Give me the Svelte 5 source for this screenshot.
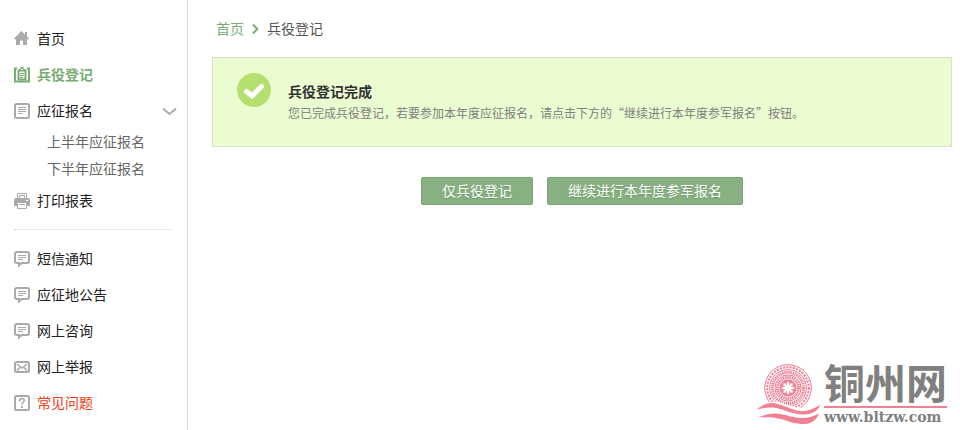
<script lang="ts">
  type Icon = 'home' | 'clipboard' | 'form' | 'printer' | 'message' | 'mail' | 'help';
  type Item = { label: string; icon: Icon; state?: 'active' | 'hot'; children?: string[] };

  const services: Item[] = [
    { label: '首页', icon: 'home' },
    { label: '兵役登记', icon: 'clipboard', state: 'active' },
    { label: '应征报名', icon: 'form', children: ['上半年应征报名', '下半年应征报名'] },
    { label: '打印报表', icon: 'printer' }
  ];
  const support: Item[] = [
    { label: '短信通知', icon: 'message' },
    { label: '应征地公告', icon: 'message' },
    { label: '网上咨询', icon: 'message' },
    { label: '网上举报', icon: 'mail' },
    { label: '常见问题', icon: 'help', state: 'hot' }
  ];

  let open = $state(true);

  // petals of the emblem's central flower
  const petals = Array.from({ length: 8 }, (_, i) => i * 45);
</script>

{#snippet glyph(name: Icon)}
  <svg class="icon" viewBox="0 0 16 16" aria-hidden="true">
    {#if name === 'home'}
      <path class="fill" d="M7.5 0 0 7.4l.8.9H2V14h4V9.5h3V14h4V8.3h1.4l.6-.9-2-2V1h-2v2.4z" />
    {:else if name === 'clipboard'}
      <path class="line" d="M3 1.5H1v13h14v-13h-2" />
      <path class="line" d="M4.5 3.5h7v9h-7z" />
      <path class="thin" d="M6 6.5h4M6 8.5h4M6 10.5h3" />
      <path class="fill" d="M5 2h1.5V0h3v2H11v2H5z" />
      <path class="cut" d="M7 2.5h2" />
    {:else if name === 'form'}
      <rect class="line" x="1" y="1" width="14" height="14" rx="1.5" />
      <path class="thin" d="M4 4.5h8M4 6.5h8M4 8.5h8M4 10.5h5" />
    {:else if name === 'printer'}
      <path class="thin" d="M3.5 5V.5h9V5M5.5 5V2.5h5V5" />
      <path class="fill" d="M2 5h12a2 2 0 0 1 2 2v6h-3V9.5H3V13H0V7a2 2 0 0 1 2-2z" />
      <path class="thin" d="M3.5 9.5h9v6h-9zM5 11.5h6" />
      <path class="cut" d="M12 7.5h2" />
    {:else if name === 'message'}
      <path class="line" d="M3 1h10a2 2 0 0 1 2 2v7a2 2 0 0 1-2 2H7.5L5 14.5V12H3a2 2 0 0 1-2-2V3a2 2 0 0 1 2-2z" />
      <path class="thin" d="M4 4.5h8M4 6.5h8M4 8.5h5" />
    {:else if name === 'mail'}
      <rect class="line" x="1" y="3" width="14" height="10" rx="1.5" />
      <path class="stroke" d="m3 5 5 4 5-4M3 11.5l3-3M13 11.5l-3-3" />
    {:else}
      <rect class="line" x="1" y="1" width="14" height="14" rx="1.5" />
      <path class="stroke" d="M5.7 6.5V5.200C5.700 3 10.300 3 10.300 5.300 10.300 7 8 7.200 8 9.800" />
      <path class="fill" d="M7 11h2v2H7z" />
    {/if}
  </svg>
{/snippet}

{#snippet menu(items: Item[])}
  <ul>
    {#each items as item}
      <li>
        {#if item.children}
          <button class="entry" aria-expanded={open} onclick={() => (open = !open)}>
            {@render glyph(item.icon)}
            <span>{item.label}</span>
            <svg class="arrow" class:closed={!open} viewBox="0 0 15 9" aria-hidden="true">
              <path d="m1 1.5 6.5 5.5L14 1.5" />
            </svg>
          </button>
          {#if open}
            <ul class="sub">
              {#each item.children as child}
                <li><a href="#apply">{child}</a></li>
              {/each}
            </ul>
          {/if}
        {:else}
          <a class="entry {item.state ?? ''}" href="#menu">
            {@render glyph(item.icon)}
            <span>{item.label}</span>
          </a>
        {/if}
      </li>
    {/each}
  </ul>
{/snippet}

<div class="page">
  <nav class="sidebar">
    {@render menu(services)}
    <hr />
    {@render menu(support)}
  </nav>

  <main>
    <div class="crumbs">
      <a href="#home">首页</a>
      <svg viewBox="0 0 7 10" aria-hidden="true"><path d="m1 .5 4.300 4.500L1 9.500" /></svg>
      <span>兵役登记</span>
    </div>

    <section class="notice">
      <svg viewBox="0 0 34 34" aria-hidden="true">
        <circle cx="17" cy="17" r="17" />
        <path d="m9.500 18.500 5.500 4.500 9.500-9.500" />
      </svg>
      <div>
        <h1>兵役登记完成</h1>
        <p>您已完成兵役登记，若要参加本年度应征报名，请点击下方的“继续进行本年度参军报名”按钮。</p>
      </div>
    </section>

    <div class="actions">
      <button>仅兵役登记</button>
      <button>继续进行本年度参军报名</button>
    </div>
  </main>

  <div class="brand">
    <svg viewBox="0 0 64 60" aria-hidden="true">
      <circle class="ring" cx="32" cy="24" r="23.3" />
      <circle class="ring" cx="32" cy="24" r="20.8" stroke-width="2" stroke-dasharray="2 1.3" />
      <circle class="ring" cx="32" cy="24" r="18.3" />
      <circle class="ring" cx="32" cy="24" r="15.6" stroke-width="3" stroke-dasharray="1.3 .8" />
      <circle class="ring" cx="32" cy="24" r="13" />
      <circle class="ring" cx="32" cy="24" r="10.5" stroke-width="3" stroke-dasharray="1.4 .8" />
      <circle class="solid" cx="32" cy="24" r="8.5" />
      {#each petals as angle}
        <path class="petal" transform="rotate({angle} 32 24)" d="M31.2 22 30.6 19 32 17.3l1.4 1.7-.6 3z" />
      {/each}
      <circle class="petal" cx="32" cy="24" r="3.2" />
      <path class="petal" d="M1 44C8 38 18 36 26 39c10 4 22 8 38 1v20H1z" />
      <path class="solid" d="M1 45.5C7 40 14 37.5 22 40c6 1.5 12 5 19 6.5 8 2 15-1 23-5.5-1 4-5 7-9 8.5-6 2-13 1-20-1-9-3-14-5-21-5-5 0-9 1-13 2z" />
      <path class="solid" d="M2 53.5C8 51 14 49 21 49.5c9 1 16 4.5 25 4.5 7 0 12-2 17-4.5-2 6-7 10-14 10.5-9 .5-16-2.500-24-5-7-2-14-2-23-1.500z" />
    </svg>
    <div>
      <strong>铜州网</strong>
      <span>www.bltzw.com</span>
    </div>
  </div>
</div>

<style>
  :global(body) {
    margin: 0;
    background: #fff;
    color: #333;
    font: 14px/20px 'Noto Sans CJK SC', sans-serif;
  }
  a { color: inherit; text-decoration: none; }
  button { font: inherit; cursor: pointer; }
  ul { list-style: none; margin: 0; padding: 0; }
  path { fill: none; }

  .page { position: relative; display: flex; min-height: 100vh; }

  /* sidebar */
  .sidebar {
    flex: none;
    box-sizing: border-box;
    width: 188px;
    padding: 21px 0 9px;
    border-right: 1px solid #d8d8d8;
  }
  .entry {
    display: flex;
    align-items: center;
    gap: 7px;
    box-sizing: border-box;
    width: 100%;
    height: 36px;
    padding: 0 10px 0 14px;
    border: 0;
    background: none;
    color: #222;
  }
  .entry span, .crumbs a, .crumbs span { padding-bottom: 2px; }
  .icon { flex: none; width: 16px; height: 16px; color: #aaa; }
  .entry.active { color: #78ad72; font-weight: bold; }
  .active .icon { color: #78ad72; }
  .entry.hot { color: #f03c14; }
  .fill { fill: currentColor; }
  .line { fill: none; stroke: currentColor; stroke-width: 2; }
  .thin { stroke: currentColor; stroke-width: 1; }
  .stroke { stroke: currentColor; stroke-width: 1.6; }
  .cut { stroke: #fff; }
  .arrow { width: 15px; height: 9px; margin-left: auto; }
  .arrow path { stroke: #aaa; stroke-width: 2; }
  .closed { transform: rotate(-90deg); }
  .sub a {
    display: block;
    box-sizing: border-box;
    height: 27px;
    padding-left: 47px;
    line-height: 25px;
    color: #666;
  }
  hr { margin: 10px 15px 11px 14px; border: 0; border-top: 1px dotted #d4d4d4; }

  /* content */
  main { flex: 1; min-width: 0; padding: 18px 8px 20px 24px; }
  .crumbs { display: flex; align-items: center; gap: 8px; padding-left: 4px; color: #555; }
  .crumbs a { color: #78ad72; }
  .crumbs svg { width: 7px; height: 10px; }
  .crumbs path { stroke: #78ad72; stroke-width: 2; }

  .notice {
    display: flex;
    gap: 17px;
    box-sizing: border-box;
    min-height: 90px;
    margin-top: 17px;
    padding: 15px 24px;
    border: 1px solid #dce0c6;
    background: #ebfdd0;
  }
  .notice svg { flex: none; width: 34px; height: 34px; }
  .notice circle { fill: #b5df6e; }
  .notice path { stroke: #fff; stroke-width: 5; stroke-linecap: round; }
  .notice div { padding-top: 7px; }
  h1 { margin: 0; font-size: 14px; line-height: 22px; }
  p { margin: 0; font-size: 12px; line-height: 22px; color: #808080; }

  .actions { display: flex; flex-wrap: wrap; justify-content: center; gap: 14px; margin-top: 30px; }
  .actions button {
    height: 28px;
    padding: 0 20px 2px;
    border: 1px solid #74a56e;
    border-radius: 2px;
    background: #88b083;
    color: #fff;
    text-shadow: 0 1px 1px #6c9867;
  }

  /* site mark in the corner */
  .brand {
    position: absolute;
    right: 13px;
    bottom: 3px;
    display: flex;
    align-items: center;
    gap: 4px;
    color: #808080;
  }
  .brand svg { width: 64px; height: 60px; }
  .brand strong {
    display: block;
    padding-top: 4px;
    border-bottom: 2px solid #f28093;
    font: bold 41px/41px 'Liberation Sans', 'Noto Sans CJK SC', sans-serif;
  }
  .brand span { display: block; font: bold 14px/19px 'DejaVu Serif', serif; }
  .ring { fill: none; stroke: #f0778c; }
  .solid { fill: #f28093; }
  .petal { fill: #fff; }
</style>
